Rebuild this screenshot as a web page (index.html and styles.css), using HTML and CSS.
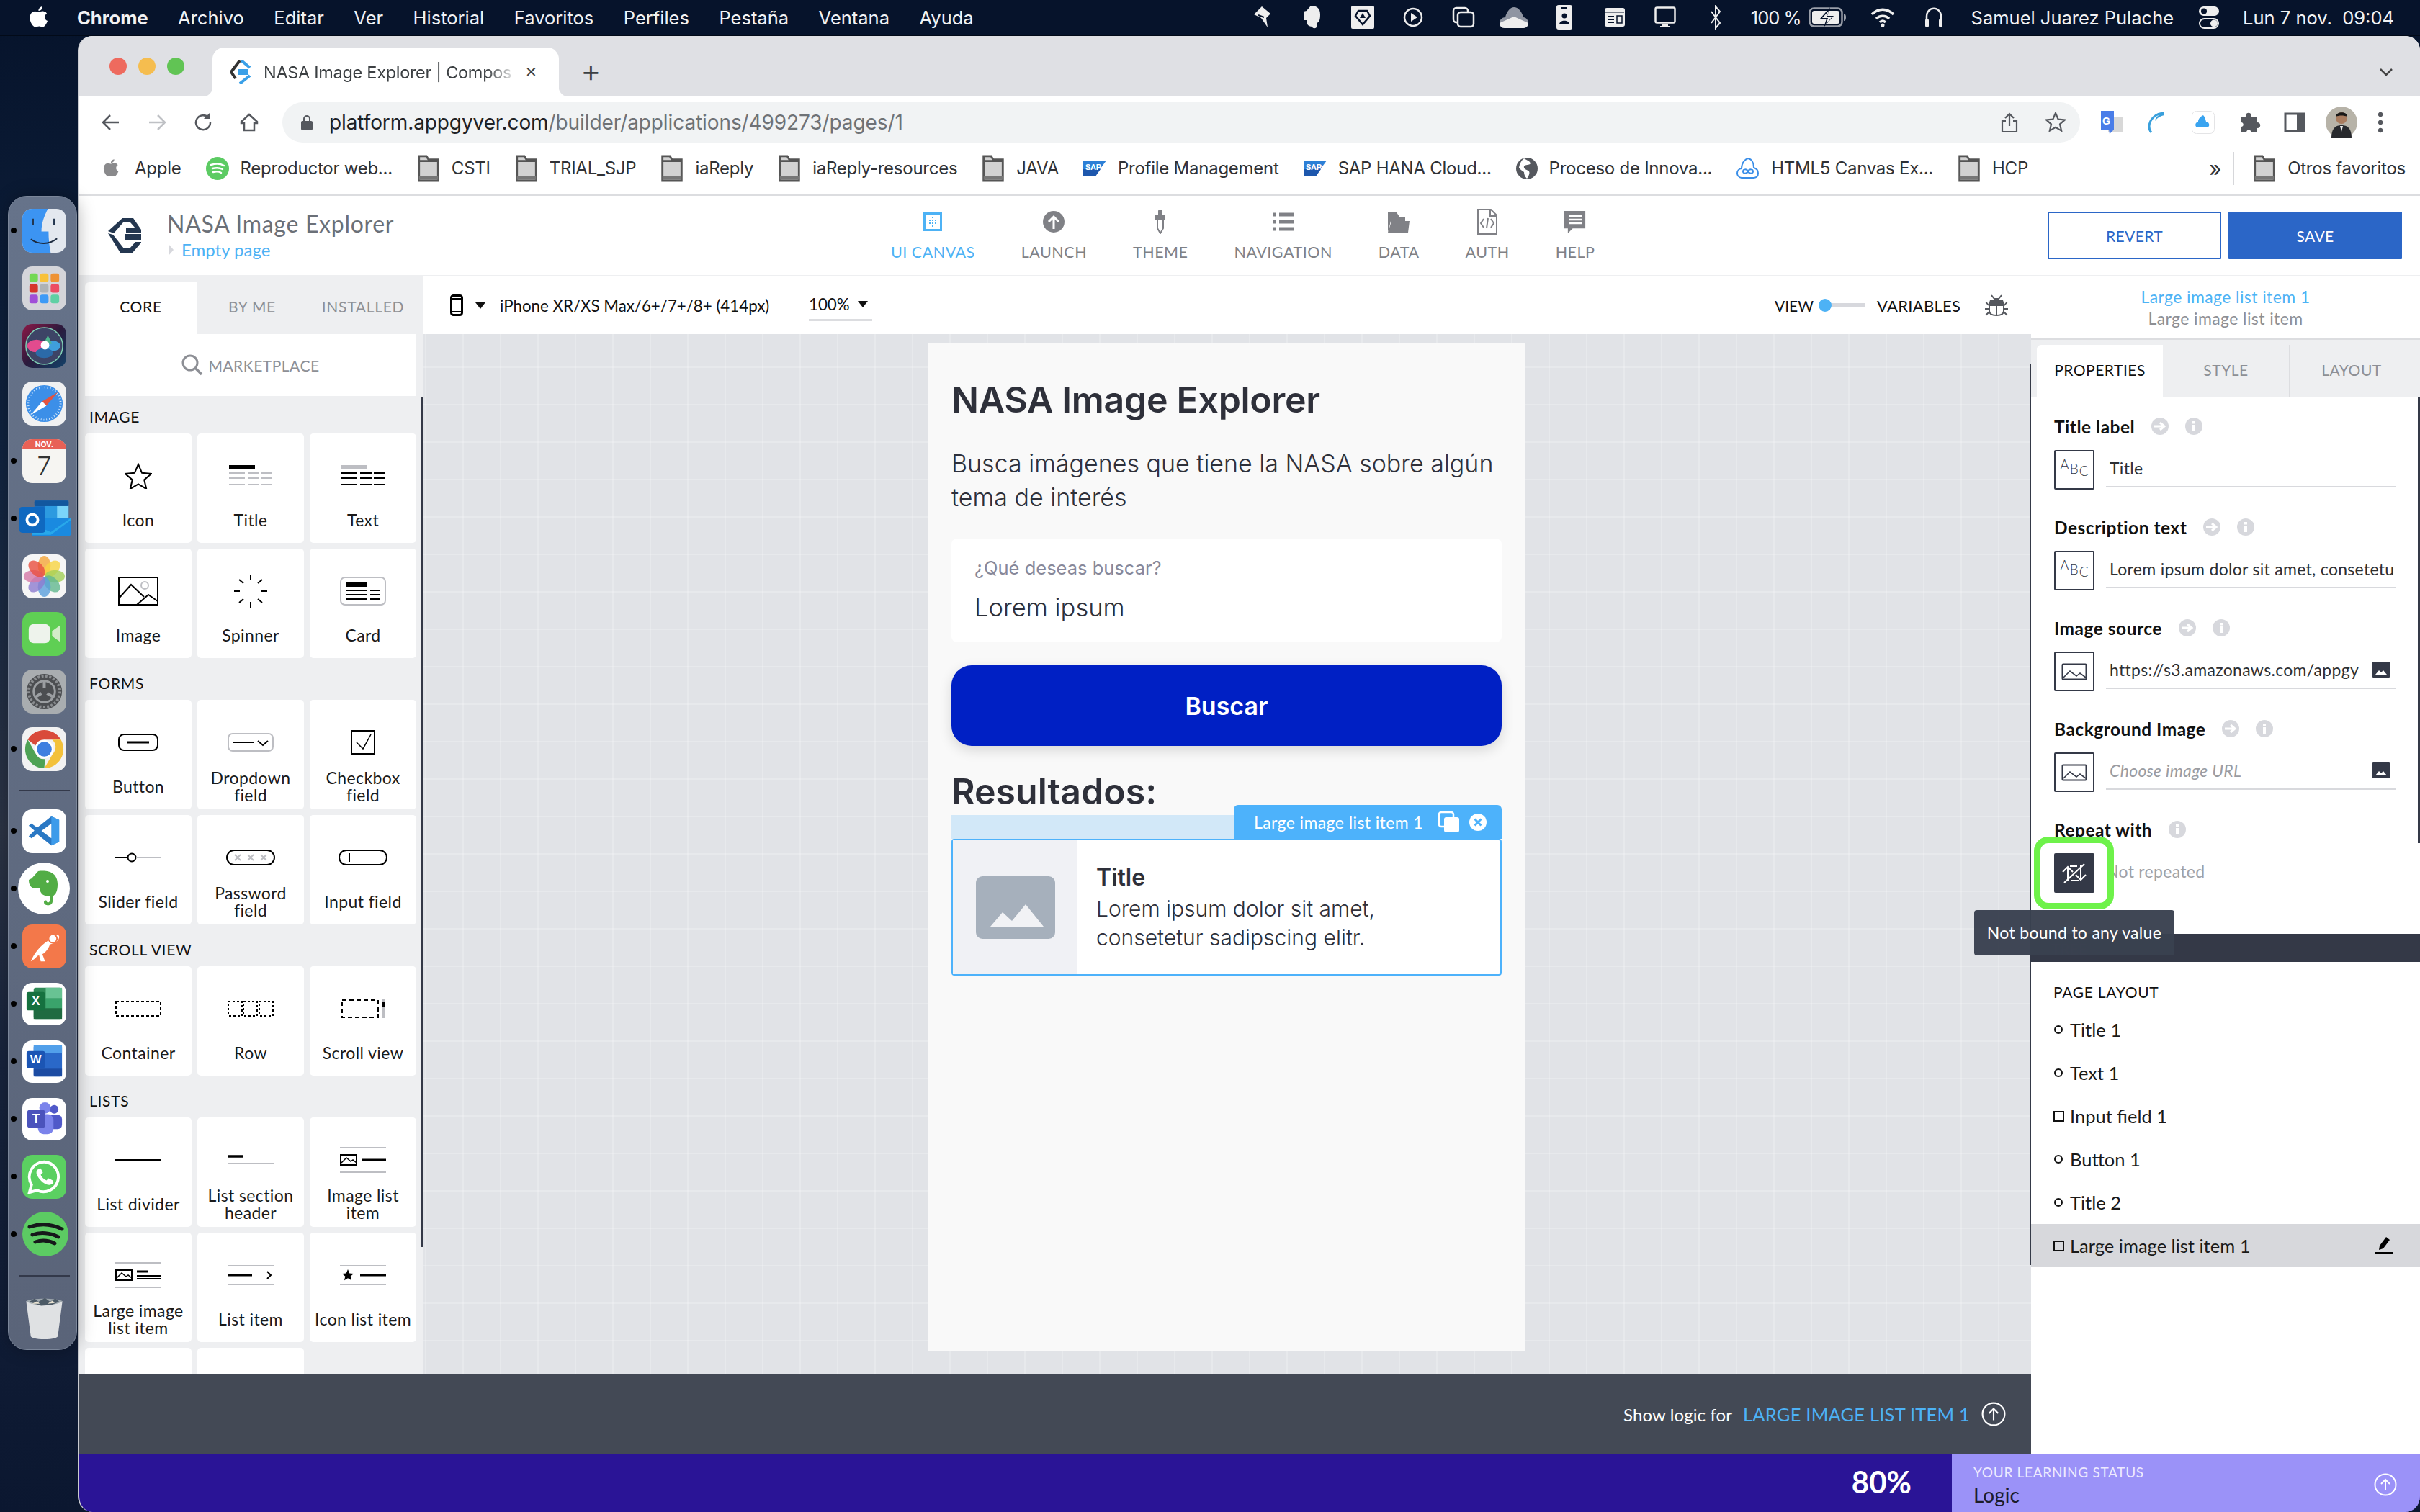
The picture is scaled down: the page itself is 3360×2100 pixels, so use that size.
FILE: index.html
```html
<!DOCTYPE html>
<html lang="es">
<head>
    <meta charset="UTF-8">
    <title>NASA Image Explorer | Composer</title>
    <link rel="stylesheet" href="styles.css">
</head>
<body>
<svg class="defs" width="0" height="0">
    <symbol id="folder" viewBox="0 0 32 40"><path d="M2 2h11l3 5h14v31H2z" fill="#d2d2d2" stroke="#555" stroke-width="3"/><path d="M2 9h28" stroke="#555" stroke-width="3"/><path d="M2 34h28" stroke="#777" stroke-width="5"/></symbol>
    <symbol id="sap" viewBox="0 0 32 26"><path d="M0 2h32L16 24H0z" fill="#2c7fd6"/><path d="M0 14h24l-7 10H0z" fill="#1d57ad"/></symbol>
    <symbol id="side-img" viewBox="0 0 36 24"><rect x="1.5" y="1.5" width="33" height="21" rx="1" fill="none" stroke="#343947" stroke-width="2"/><path d="M3 20l9-9 9 7 5-4 8 6" fill="none" stroke="#343947" stroke-width="1.6"/></symbol>
    <symbol id="next" viewBox="0 0 24 24"><circle cx="12" cy="12" r="12" fill="#d7d8dd"/><path d="M4 12h14M12 7l6 5-6 5" stroke="#fff" stroke-width="3" fill="none"/></symbol>
    <symbol id="info" viewBox="0 0 24 24"><circle cx="12" cy="12" r="12" fill="#d7d8dd"/><rect x="10" y="10" width="4" height="9" fill="#fff"/><rect x="10" y="5" width="4" height="3.5" fill="#fff"/></symbol>
    <symbol id="pic" viewBox="0 0 24 22"><rect width="24" height="22" rx="1" fill="#343947"/><path d="M4 18l5-6 3 3 3-3 5 6z" fill="#fff"/></symbol>
    <symbol id="circle-up" viewBox="0 0 32 32"><circle cx="16" cy="16" r="14.5" fill="none" stroke="currentColor" stroke-width="2"/><path d="M16 24V9M10 15l6-6 6 6" fill="none" stroke="currentColor" stroke-width="2"/></symbol>
    <symbol id="mini-star" viewBox="0 0 40 38"><path d="M20 2l5.4 12.6 13.6 1.2-10.300 9 3.100 13.200L20 31l-11.800 7 3.100-13.200L1 15.800l13.600-1.200z" fill="none" stroke="#000" stroke-width="2.200"/></symbol>
</svg>

<header class="menubar">
    <svg class="menu-apple" viewBox="0 0 24 30"><path d="M17 1c.3 3-2.400 5.600-5 5.400C11.700 3.700 14.500 1.200 17 1zM12.300 8c1.300 0 2.800-1.100 5-1.100 1.400 0 3.800.6 5.200 2.800-3.900 2.400-3.200 7.900.9 9.500-1 2.800-3.600 7.800-6.300 7.800-1.600 0-2.500-1-4.300-1-1.900 0-2.900 1-4.400 1C5.200 27 1 20.500 1 15.200 1 10 4.300 7 7.400 7c2 0 3.700 1 4.900 1z" fill="#fff"/></svg>
    <nav class="menu-left">
        <strong>Chrome</strong><span>Archivo</span><span>Editar</span><span>Ver</span><span>Historial</span><span>Favoritos</span><span>Perfiles</span><span>Pestaña</span><span>Ventana</span><span>Ayuda</span>
    </nav>
    <div class="menu-right">
        <i class="tray"><svg width="26" height="32" viewBox="0 0 26 32"><path d="M13 1l12 10-6 6 2 13-9-13-10-5z" fill="#eee"/><path d="M8 13l8 3" stroke="#06132b" stroke-width="2"/></svg></i>
        <i class="tray"><svg width="28" height="34" viewBox="0 0 28 34"><path d="M6 8l6-7c8 0 13 3 13 12 0 7-1 11-5 12v5c0 3-6 3-6 0-6 0-8-4-8-9H2V9z" fill="#eee"/></svg></i>
        <i class="tray"><svg width="32" height="32" viewBox="0 0 32 32"><rect width="32" height="32" rx="2" fill="#eee"/><path d="M10 7h12l4 7-10 12L6 14z" fill="none" stroke="#06132b" stroke-width="2.500"/><path d="M16 10l4 7h-8z" fill="#06132b"/></svg></i>
        <i class="tray"><svg width="28" height="28" viewBox="0 0 28 28"><circle cx="14" cy="14" r="12" fill="none" stroke="#eee" stroke-width="2.500"/><path d="M11 8l9 6-9 6z" fill="#eee"/></svg></i>
        <i class="tray"><svg width="32" height="30" viewBox="0 0 32 30"><rect x="2" y="2" width="20" height="20" rx="4" fill="none" stroke="#eee" stroke-width="2.500"/><rect x="8" y="8" width="22" height="20" rx="4" fill="#06132b" stroke="#eee" stroke-width="2.500"/></svg></i>
        <i class="tray"><svg width="42" height="32" viewBox="0 0 42 32"><path d="M1 24c0-5 4-8 8-8 2-8 7-14 12-14 6 0 11 6 13 14 4 0 7 4 7 8 0 4-3 7-7 7H8c-4 0-7-3-7-7z" fill="#8f95a2"/><path d="M1 24l20-9 20 9c0 4-3 7-7 7H8c-4 0-7-3-7-7z" fill="#eee"/></svg></i>
        <i class="tray"><svg width="22" height="34" viewBox="0 0 22 34"><rect width="22" height="34" rx="3" fill="#eee"/><rect x="7" y="3" width="8" height="2" fill="#06132b"/><circle cx="11" cy="15" r="3.500" fill="#06132b"/><path d="M4 27c0-7 14-7 14 0z" fill="#06132b"/></svg></i>
        <i class="tray"><svg width="30" height="28" viewBox="0 0 30 28"><rect x="1" y="1" width="28" height="26" rx="3" fill="#eee"/><path d="M2 7h26" stroke="#06132b"/><path d="M5 12h9v2H5zM5 16h9v2H5zM5 20h9v2H5z" fill="#06132b"/><path d="M18 12h7v10h-7z" fill="none" stroke="#06132b" stroke-width="1.500"/></svg></i>
        <i class="tray"><svg width="30" height="30" viewBox="0 0 30 30"><rect x="1.500" y="1.500" width="27" height="21" rx="2" fill="none" stroke="#eee" stroke-width="2.500"/><path d="M11 24h8v3h3v2H8v-2h3z" fill="#eee"/></svg></i>
        <i class="tray"><svg width="16" height="34" viewBox="0 0 16 34"><path d="M2 9l12 16-6 7V2l6 7L2 25" fill="none" stroke="#eee" stroke-width="2"/></svg></i>
        <span class="menu-batt">100 %</span>
        <svg class="menu-gap" width="52" height="28" viewBox="0 0 52 28"><rect x="1.500" y="1.500" width="45" height="25" rx="6" fill="none" stroke="#9a9fa9" stroke-width="2.500"/><rect x="5" y="5" width="38" height="18" rx="3" fill="#eee"/><path d="M49 9v10c2 0 3-2 3-5s-1-5-3-5z" fill="#9a9fa9"/><path d="M30 0L16 16h9l-4 12 14-16h-9z" fill="#06132b"/><path d="M29 4L19 15h8l-3 9 9-11h-8z" fill="#eee"/></svg>
        <svg class="menu-wifi" width="34" height="28" viewBox="0 0 34 28"><path d="M2 10c9-9 21-9 30 0M8 16c5-5 13-5 18 0M13 21c2.500-2.500 5.500-2.500 8 0" fill="none" stroke="#eee" stroke-width="3.500"/><circle cx="17" cy="25" r="2.500" fill="#eee"/></svg>
        <svg class="menu-head" width="28" height="30" viewBox="0 0 28 30"><path d="M4 24V14C4 -1 24 -1 24 14v10" fill="none" stroke="#eee" stroke-width="2.500"/><rect x="2" y="17" width="5" height="12" rx="2.500" fill="#eee"/><rect x="21" y="17" width="5" height="12" rx="2.500" fill="#eee"/></svg>
        <span class="menu-user">Samuel Juarez Pulache</span>
        <svg class="menu-toggle" width="30" height="32" viewBox="0 0 30 32"><rect x="1" y="1" width="28" height="13" rx="6.500" fill="#eee"/><circle cx="8" cy="7.500" r="4" fill="#06132b"/><rect x="2" y="18" width="26" height="13" rx="6.500" fill="none" stroke="#eee" stroke-width="2"/><circle cx="22" cy="24.500" r="5" fill="#eee"/></svg>
        <span class="menu-clock">Lun 7 nov.&nbsp; 09:04</span>
    </div>
</header>

<aside class="dock">
    <div class="dock-slot on"><svg viewBox="0 0 62 62"><rect width="62" height="62" rx="14" fill="#e3e8ef"/><path d="M14 0h22c-5 10-9 20-9 32h10c0 10 1 20 3 30H14C6 62 0 56 0 48V14C0 6 6 0 14 0z" fill="#3c94f2"/><path d="M15 14v9M45 14v9" stroke="#23364f" stroke-width="2.500"/><path d="M12 43c11 8 26 8 37-1" fill="none" stroke="#1d2b3f" stroke-width="2"/></svg></div>
    <div class="dock-slot"><svg viewBox="0 0 62 62"><rect width="62" height="62" rx="14" fill="#d4d5da"/><g><rect x="10" y="10" width="12" height="12" rx="3" fill="#72d854"/><rect x="25" y="10" width="12" height="12" rx="3" fill="#f8c13a"/><rect x="40" y="10" width="12" height="12" rx="3" fill="#ee9233"/><rect x="10" y="25" width="12" height="12" rx="3" fill="#d6352b"/><rect x="25" y="25" width="12" height="12" rx="3" fill="#aeb2b6"/><rect x="40" y="25" width="12" height="12" rx="3" fill="#ec4c63"/><rect x="10" y="40" width="12" height="12" rx="3" fill="#a04fd8"/><rect x="25" y="40" width="12" height="12" rx="3" fill="#3d9af6"/><rect x="40" y="40" width="12" height="12" rx="3" fill="#5fd0a4"/></g></svg></div>
    <div class="dock-slot"><svg viewBox="0 0 62 62"><defs><linearGradient id="siri" x1="0" y1="0" x2="1" y2="1"><stop offset="0" stop-color="#8d1846"/><stop offset=".5" stop-color="#2a1a3c"/><stop offset="1" stop-color="#12436a"/></linearGradient></defs><rect width="62" height="62" rx="14" fill="url(#siri)"/><circle cx="31" cy="31" r="26" fill="#3d4466" stroke="#7fd0b4" stroke-width="1.500"/><ellipse cx="20" cy="31" rx="13" ry="9" fill="#e24b8e"/><ellipse cx="44" cy="31" rx="10" ry="7" fill="#3f9fdc"/><ellipse cx="31" cy="41" rx="12" ry="7" fill="#2b6aa8"/><path d="M36 16l6 12-12 0z" fill="#4fb58e"/><circle cx="32" cy="30" r="6" fill="#fff"/></svg></div>
    <div class="dock-slot"><svg viewBox="0 0 62 62"><rect width="62" height="62" rx="14" fill="#f0f1f2"/><circle cx="31" cy="31" r="26" fill="#3c8fe8"/><circle cx="31" cy="31" r="23" fill="none" stroke="#cfe5fb" stroke-width="3" stroke-dasharray="1 3"/><path d="M50 15L28 28l6 6z" fill="#e5533d"/><path d="M12 47l22-13-6-6z" fill="#fff"/></svg></div>
    <div class="dock-slot on"><svg viewBox="0 0 62 62"><rect width="62" height="62" rx="14" fill="#f6f5f2"/><path d="M0 14C0 6 6 0 14 0h34c8 0 14 6 14 14H0z" fill="#e86156"/><text x="31" y="11" font-size="10.500" font-weight="700" fill="#fff" text-anchor="middle" font-family="Inter">NOV.</text><text x="31" y="51" font-size="36" fill="#333" text-anchor="middle" font-family="Inter" font-weight="300">7</text></svg></div>
    <div class="dock-slot on"><svg class="wide" viewBox="0 0 76 52"><rect x="22" y="0" width="50" height="30" fill="#1a6fbf"/><rect x="22" y="0" width="50" height="8" rx="2" fill="#12579e"/><rect x="55" y="8" width="17" height="22" fill="#7ad4fa"/><rect x="38" y="8" width="17" height="22" fill="#2c9ae0"/><path d="M18 26l58-1v22c0 3-2 5-5 5H18z" fill="#1a8ae0"/><path d="M18 34l28 12 30-21v3L46 50H18z" fill="#28a8ea"/><rect x="0" y="9" width="38" height="38" rx="4" fill="#0f68c0"/><circle cx="19" cy="28" r="8" fill="none" stroke="#fff" stroke-width="4"/></svg></div>
    <div class="dock-slot"><svg viewBox="0 0 62 62"><rect width="62" height="62" rx="14" fill="#f6f6f6"/><g transform="translate(31 31)" fill-opacity=".8"><ellipse cy="-15" rx="9" ry="14" fill="#f5a63a"/><ellipse cy="-15" rx="9" ry="14" fill="#f8d442" transform="rotate(45)"/><ellipse cy="-15" rx="9" ry="14" fill="#a3cf58" transform="rotate(90)"/><ellipse cy="-15" rx="9" ry="14" fill="#62b88e" transform="rotate(135)"/><ellipse cy="-15" rx="9" ry="14" fill="#5a9fdc" transform="rotate(180)"/><ellipse cy="-15" rx="9" ry="14" fill="#8d7ccf" transform="rotate(225)"/><ellipse cy="-15" rx="9" ry="14" fill="#d678a8" transform="rotate(270)"/><ellipse cy="-15" rx="9" ry="14" fill="#ea4f3e" transform="rotate(315)"/></g></svg></div>
    <div class="dock-slot"><svg viewBox="0 0 62 62"><rect width="62" height="62" rx="14" fill="#5fcf54"/><rect x="9" y="17" width="30" height="27" rx="7" fill="#eef3ec"/><path d="M42 27l11-8v23l-11-8z" fill="#d3ecc9"/></svg></div>
    <div class="dock-slot"><svg viewBox="0 0 62 62"><rect width="62" height="62" rx="14" fill="#a9adb0"/><circle cx="31" cy="31" r="25" fill="#4c4e51"/><circle cx="31" cy="31" r="22" fill="none" stroke="#8a8d90" stroke-width="4" stroke-dasharray="3 2.500"/><circle cx="31" cy="31" r="15" fill="none" stroke="#9b9ea1" stroke-width="3"/><path d="M31 31V16M31 31l13 8M31 31l-13 8" stroke="#9b9ea1" stroke-width="4"/><circle cx="31" cy="31" r="5" fill="#4c4e51"/></svg></div>
    <div class="dock-slot on"><svg viewBox="0 0 62 62"><rect width="62" height="62" rx="14" fill="#f2f2f2"/><path d="M31 4a27 27 0 0 1 23.400 13.500H31a13.500 13.500 0 0 0-12.500 8.500L7.600 17.500A27 27 0 0 1 31 4z" fill="#d94a3b"/><path d="M54.400 17.500A27 27 0 0 1 31 58l12-20.500a13.500 13.500 0 0 0-1-20z" fill="#f3c13a"/><path d="M31 58A27 27 0 0 1 7.600 17.500L19 37.500a13.500 13.500 0 0 0 13 7.500z" fill="#4ea254"/><circle cx="31" cy="31" r="13" fill="#fff"/><circle cx="31" cy="31" r="10.500" fill="#3f7fe0"/></svg></div>
    <div class="dock-sep"></div>
    <div class="dock-slot on"><svg viewBox="0 0 62 62"><rect width="62" height="62" rx="14" fill="#fff"/><path d="M9 23l4-3 8 6 20-16 11 5v31l-11 5-20-16-8 6-4-3 8-8z" fill="#2a78c4"/><path d="M41 10l11 5v31l-11 5z" fill="#3d9bea"/><path d="M41 20v21L27 30.500z" fill="#fff"/></svg></div>
    <div class="dock-slot on"><svg class="big" viewBox="0 0 72 72"><circle cx="36" cy="36" r="36" fill="#fff"/><path d="M19 22l9-10c14-2 27 2 27 18 0 9-2 14-7 17v7c0 7-12 7-12 1 0-3 4-3 4-1 0 2 4 2 4-1v-6c-9 0-13-4-14-11h-5C17 36 15 30 15 24z" fill="#52ad45"/><circle cx="41" cy="26" r="2" fill="#fff"/></svg></div>
    <div class="dock-slot on"><svg viewBox="0 0 62 62"><rect width="62" height="62" rx="14" fill="#f3784a"/><path d="M12 52c5-12 13-22 24-29 3-5 8-8 14-8 2 0 3 3 1 6-3 5-8 6-12 7-3 9-9 15-17 16-4 4-6 6-10 8z" fill="#fff"/><circle cx="43" cy="20" r="6" fill="#fff" stroke="#f3784a" stroke-width="2"/><path d="M27 38l5 14h-6l-3-11" fill="#fff"/></svg></div>
    <div class="dock-slot on"><svg viewBox="0 0 62 62"><rect y="1" width="62" height="60" rx="14" fill="#fff"/><rect x="16" y="8" width="40" height="44" rx="3" fill="#2f8a57"/><rect x="33" y="8" width="23" height="15" fill="#68c393"/><rect x="33" y="23" width="23" height="14" fill="#3aa36b"/><rect x="16" y="37" width="40" height="15" fill="#1f6b41"/><rect x="6" y="14" width="26" height="26" rx="3" fill="#15713f"/><text x="19" y="33" font-size="18" font-weight="700" fill="#fff" text-anchor="middle" font-family="Liberation Sans">X</text></svg></div>
    <div class="dock-slot on"><svg viewBox="0 0 62 62"><rect y="1" width="62" height="60" rx="14" fill="#fff"/><rect x="16" y="8" width="40" height="44" rx="3" fill="#2a68c8"/><rect x="16" y="8" width="40" height="11" fill="#52a0ea"/><rect x="16" y="41" width="40" height="11" fill="#1c4ca3"/><rect x="6" y="16" width="26" height="24" rx="3" fill="#1b55b4"/><text x="19" y="34" font-size="17" font-weight="700" fill="#fff" text-anchor="middle" font-family="Liberation Sans">W</text></svg></div>
    <div class="dock-slot on"><svg viewBox="0 0 62 62"><rect y="1" width="62" height="60" rx="14" fill="#fff"/><circle cx="45" cy="17" r="6" fill="#5059c9"/><circle cx="32" cy="15" r="8" fill="#7b83eb"/><rect x="36" y="25" width="20" height="20" rx="6" fill="#5059c9"/><rect x="22" y="24" width="22" height="28" rx="8" fill="#7b83eb"/><rect x="7" y="18" width="25" height="25" rx="3" fill="#4b53bc"/><text x="19.500" y="37" font-size="18" font-weight="700" fill="#fff" text-anchor="middle" font-family="Liberation Sans">T</text></svg></div>
    <div class="dock-slot on"><svg viewBox="0 0 62 62"><rect width="62" height="62" rx="14" fill="#5bd061"/><path d="M31 10a21 21 0 0 0-18 32l-3 11 11-3a21 21 0 1 0 10-40z" fill="none" stroke="#fff" stroke-width="4"/><path d="M23 20c-3 1-4 5-2 9 3 6 8 11 14 13 4 1 8 0 9-3l-1-3-6-3-3 3c-3-1-7-5-8-8l3-3-3-6z" fill="#fff"/></svg></div>
    <div class="dock-slot on"><svg class="wide" viewBox="0 0 64 62"><ellipse cx="32" cy="31" rx="32" ry="31" fill="#5ccb63"/><path d="M10 21c15-5 31-4 45 3M14 32c11-4 25-3 36 3M18 42c9-3 19-2 27 2" fill="none" stroke="#16181a" stroke-width="5" stroke-linecap="round"/></svg></div>
    <div class="dock-sep low"></div>
    <div class="dock-slot"><svg viewBox="0 0 62 68"><path d="M3 8l7 54c0 3 8 5 21 5s21-2 21-5l7-54z" fill="#dfe1e3"/><path d="M3 8c8-5 48-5 56 0-8 8-48 8-56 0z" fill="#9ea7ad"/><path d="M8 9l8-5 6 5 10-6 8 6 8-5 6 5-12 5-16 1z" fill="#4b5965"/><path d="M12 12l8-4 4 4zM36 12l8-5 3 4z" fill="#e9e3d2"/></svg></div>
</aside>

<div class="window">
    <div class="tabstrip">
        <div class="lights"><i class="red"></i><i class="yellow"></i><i class="green"></i></div>
        <div class="tab">
            <svg class="tab-fav" width="30" height="34" viewBox="0 0 30 34"><path d="M14 1L2 17l6 9" fill="none" stroke="#333" stroke-width="4"/><path d="M16 1l12 10M14 33l14-11" fill="none" stroke="#3aa0e8" stroke-width="4"/><path d="M12 13h14v8H12z" fill="#3aa0e8"/></svg>
            <span class="tab-title">NASA Image Explorer | Compos</span>
            <span class="tab-x">✕</span>
        </div>
        <span class="tab-plus">+</span>
        <svg class="tab-more" width="18" height="12" viewBox="0 0 18 12"><path d="M1 2l8 8 8-8" fill="none" stroke="#444" stroke-width="2.500"/></svg>
    </div>

    <div class="toolbar">
        <svg class="tool-btn" viewBox="0 0 28 28"><path d="M25 14H4M13 4L3 14l10 10" fill="none" stroke="#55585e" stroke-width="2.500"/></svg>
        <svg class="tool-btn" viewBox="0 0 28 28"><path d="M3 14h21M15 4l10 10-10 10" fill="none" stroke="#bfc1c5" stroke-width="2.500"/></svg>
        <svg class="tool-btn" viewBox="0 0 28 28"><path d="M24 14a10 10 0 1 1-3-7" fill="none" stroke="#55585e" stroke-width="2.500"/><path d="M23 1v8h-8z" fill="#55585e"/></svg>
        <svg class="tool-btn" viewBox="0 0 28 28"><path d="M14 3L3 13v2h4v10h14V15h4v-2z" fill="none" stroke="#55585e" stroke-width="2.500"/></svg>
        <div class="omnibox">
            <svg class="lock" width="16" height="22" viewBox="0 0 16 22"><rect y="9" width="16" height="13" rx="2" fill="#55585e"/><path d="M4 9V6a4 4 0 0 1 8 0v3" fill="none" stroke="#55585e" stroke-width="2"/></svg>
            <span class="url"><b>platform.appgyver.com</b>/builder/applications/499273/pages/1</span>
            <svg class="omni-icon" viewBox="0 0 28 30"><path d="M14 20V3M8 9l6-6 6 6M9 13H4v15h20V13h-5" fill="none" stroke="#55585e" stroke-width="2.200"/></svg>
            <svg class="omni-icon" viewBox="0 0 28 30"><path d="M14 2l3.700 8.600 9.300.8-7 6.100 2.100 9.100-8.100-4.800-8.100 4.800 2.100-9.100-7-6.100 9.300-.8z" fill="none" stroke="#55585e" stroke-width="2.200"/></svg>
        </div>
        <div class="extensions">
            <svg width="32" height="32" viewBox="0 0 32 32"><rect x="12" y="8" width="20" height="22" fill="#d8d8d8"/><path d="M2 0h18v26l-6 6-1-6H2z" fill="#4a7de8"/><text x="4" y="19" font-size="14" font-weight="700" fill="#fff" font-family="Liberation Sans">G</text></svg>
            <svg width="32" height="32" viewBox="0 0 32 32"><path d="M26 3C14 3 5 12 5 22c0 4 1 6 3 8" fill="none" stroke="#3aa0dc" stroke-width="3"/><path d="M26 3c-7 1-12 5-13 11 4-5 8-7 13-8z" fill="#3aa0dc"/></svg>
            <svg width="32" height="32" viewBox="0 0 32 32"><rect x=".5" y=".5" width="31" height="31" rx="6" fill="#fff" stroke="#e4e4e6"/><path d="M9 23c-5 0-5-7 0-8 0-4 3-7 7-9 3 3 3 6 4 9 5 0 6 8 1 8z" fill="#3aa4f0"/></svg>
            <svg width="32" height="32" viewBox="0 0 32 32"><path d="M4 8h7c-1-7 9-7 8 0h7v8c7-1 7 9 0 8v6h-8c1-5-6-5-6 0H4v-8c5 1 5-7 0-6z" fill="#55585e"/></svg>
            <svg width="30" height="30" viewBox="0 0 30 30"><path d="M2 3h26v24H2z" fill="none" stroke="#55585e" stroke-width="3"/><rect x="18" y="3" width="10" height="24" fill="#55585e"/></svg>
            <svg class="avatar" width="44" height="44" viewBox="0 0 44 44"><circle cx="22" cy="22" r="22" fill="#b7b3a8"/><path d="M8 44c0-14 6-18 14-18s14 4 14 18z" fill="#27292d"/><circle cx="22" cy="16" r="8" fill="#a97c5f"/><path d="M14 14c0-7 16-8 16 0-5-2-11-2-16 0z" fill="#191919"/><path d="M20 27h4l-2 8z" fill="#eee"/></svg>
            <svg width="8" height="30" viewBox="0 0 8 30"><circle cx="4" cy="4" r="3.200" fill="#55585e"/><circle cx="4" cy="15" r="3.200" fill="#55585e"/><circle cx="4" cy="26" r="3.200" fill="#55585e"/></svg>
        </div>
    </div>

    <div class="bookmarks">
        <span class="bm bm-apple"><svg class="bm-ico" width="22" height="28" viewBox="0 0 24 30"><path d="M17 1c.3 3-2.400 5.600-5 5.400C11.700 3.700 14.500 1.200 17 1zM12.300 8c1.300 0 2.800-1.100 5-1.100 1.400 0 3.800.6 5.200 2.800-3.900 2.400-3.200 7.900.9 9.500-1 2.800-3.600 7.800-6.300 7.800-1.600 0-2.500-1-4.300-1-1.900 0-2.900 1-4.400 1C5.200 27 1 20.500 1 15.200 1 10 4.300 7 7.400 7c2 0 3.700 1 4.900 1z" fill="#8a8a8c"/></svg>Apple</span>
        <span class="bm"><svg class="bm-ico" width="32" height="32" viewBox="0 0 32 32"><circle cx="16" cy="16" r="16" fill="#5ccb63"/><path d="M7 11c6-2 13-2 18 1M9 16c5-1 10-1 14 1M10 21c4-1 8-1 11 1" fill="none" stroke="#fff" stroke-width="2.500" stroke-linecap="round"/></svg>Reproductor web...</span>
        <span class="bm"><svg class="bm-ico" width="32" height="38"><use href="#folder"/></svg>CSTI</span>
        <span class="bm"><svg class="bm-ico" width="32" height="38"><use href="#folder"/></svg>TRIAL_SJP</span>
        <span class="bm"><svg class="bm-ico" width="32" height="38"><use href="#folder"/></svg>iaReply</span>
        <span class="bm"><svg class="bm-ico" width="32" height="38"><use href="#folder"/></svg>iaReply-resources</span>
        <span class="bm"><svg class="bm-ico" width="32" height="38"><use href="#folder"/></svg>JAVA</span>
        <span class="bm"><svg class="bm-ico" width="32" height="26" viewBox="0 0 32 26"><use href="#sap"/><text x="3" y="15" font-size="11" font-weight="700" fill="#fff" font-family="Liberation Sans">SAP</text></svg>Profile Management</span>
        <span class="bm"><svg class="bm-ico" width="32" height="26" viewBox="0 0 32 26"><use href="#sap"/><text x="3" y="15" font-size="11" font-weight="700" fill="#fff" font-family="Liberation Sans">SAP</text></svg>SAP HANA Cloud...</span>
        <span class="bm"><svg class="bm-ico" width="30" height="30" viewBox="0 0 30 30"><circle cx="15" cy="15" r="15" fill="#55585e"/><path d="M11 1c4 3 8 3 9 7-2 3-7 1-9 4-1 3 3 5 6 6 3 2 1 7-2 11-3-3-4-6-4-9-2-2-5-3-7-6 1-6 4-11 7-13z" fill="#fff"/></svg>Proceso de Innova...</span>
        <span class="bm"><svg class="bm-ico" width="32" height="32" viewBox="0 0 32 32"><path d="M7 29c-8-1-8-12 0-13 0-8 5-13 9-14 5 1 8 6 8 13 8 2 8 13 0 14z" fill="none" stroke="#3a8ee8" stroke-width="2"/><path d="M16 20c-2-4-7-3-7 0s5 4 7 0c2-4 7-3 7 0s-5 4-7 0z" fill="none" stroke="#3a8ee8" stroke-width="2"/></svg>HTML5 Canvas Ex...</span>
        <span class="bm"><svg class="bm-ico" width="32" height="38"><use href="#folder"/></svg>HCP</span>
        <span class="bm-more">»</span>
        <span class="bm bm-other"><svg class="bm-ico" width="32" height="38"><use href="#folder"/></svg>Otros favoritos</span>
    </div>

    <div class="app-header">
        <div class="brand">
            <svg class="brand-logo" width="46" height="48" viewBox="0 0 46 48"><path d="M20 0h15l11 16v4H25v-6h13l-7-8H21L8 21l-8-3z" fill="#243750"/><rect x="24" y="22" width="22" height="9" fill="#243750"/><path d="M0 21l7 2 15 19h8l8-9h8v1L34 48H17z" fill="#243750"/></svg>
            <div>
                <div class="brand-name">NASA Image Explorer</div>
                <div class="brand-page"><i></i>Empty page</div>
            </div>
        </div>
        <nav class="app-nav">
            <a class="active"><svg width="26" height="26" viewBox="0 0 26 26"><rect x="1.500" y="1.500" width="23" height="23" fill="none" stroke="#4db2f5" stroke-width="3"/><path d="M13 6v14M9 10v6M17 10v6" stroke="#4db2f5" stroke-width="2" stroke-dasharray="2 2"/></svg>UI CANVAS</a>
            <a><svg width="30" height="30" viewBox="0 0 30 30"><circle cx="15" cy="15" r="15" fill="#808186"/><path d="M15 25V9M8 15l7-7 7 7" fill="none" stroke="#fff" stroke-width="3"/></svg>LAUNCH</a>
            <a><svg width="18" height="34" viewBox="0 0 18 34"><rect x="6" y="0" width="6" height="10" rx="2" fill="#808186"/><rect x="2" y="8" width="14" height="6" fill="#808186"/><path d="M5 14v12l4 7 4-7V14" fill="none" stroke="#808186" stroke-width="2"/></svg>THEME</a>
            <a><svg width="30" height="28" viewBox="0 0 30 28"><path d="M9 4h21M9 14h21M9 24h21" stroke="#808186" stroke-width="5"/><path d="M0 4h5M0 14h5M0 24h5" stroke="#808186" stroke-width="5"/></svg>NAVIGATION</a>
            <a><svg width="30" height="30" viewBox="0 0 30 30"><path d="M0 2h12l4 6h8v6H4L0 30z" fill="#808186"/><path d="M5 14h25l-2 16H0z" fill="#808186"/></svg>DATA</a>
            <a><svg width="28" height="36" viewBox="0 0 28 36"><path d="M1 1h18l8 8v26H1z" fill="none" stroke="#808186" stroke-width="2"/><path d="M18 1v9h9M9 14l-4 6 4 6M19 14l4 6-4 6M15 13l-2 14" fill="none" stroke="#808186" stroke-width="2"/></svg>AUTH</a>
            <a><svg width="30" height="30" viewBox="0 0 30 30"><path d="M0 0h30v25H12l-7 7v-7H0z" fill="#808186" transform="scale(.97)"/><path d="M6 7h18M6 12h18M6 17h18" stroke="#fff" stroke-width="2.500"/></svg>HELP</a>
        </nav>
        <div class="app-actions">
            <button class="btn-revert">REVERT</button>
            <button class="btn-save">SAVE</button>
        </div>
    </div>

    <div class="app-body">
        <div class="designer">
            <div class="design-main">
                <section class="palette">
                    <div class="pal-tabs">
                        <span class="active">CORE</span><span>BY ME</span><span>INSTALLED</span>
                    </div>
                    <div class="marketplace">
                        <svg width="30" height="30" viewBox="0 0 30 30"><circle cx="12" cy="12" r="10" fill="none" stroke="#8d8f95" stroke-width="3"/><path d="M19 19l9 9" stroke="#8d8f95" stroke-width="3.500"/></svg>
                        MARKETPLACE
                    </div>
                    <h4 class="pal-head first">IMAGE</h4>
                    <div class="pal-grid">
                        <div class="card"><div class="card-ico"><svg width="38" height="36"><use href="#mini-star"/></svg></div><span>Icon</span></div>
                        <div class="card"><div class="card-ico"><svg width="60" height="30" viewBox="0 0 60 30"><rect width="36" height="6" fill="#000"/><path d="M0 11h60M0 18h60M0 27h60" stroke="#bdbec3" stroke-width="2" stroke-dasharray="22 4 16 3 15 0"/></svg></div><span>Title</span></div>
                        <div class="card"><div class="card-ico"><svg width="60" height="30" viewBox="0 0 60 30"><rect width="36" height="6" fill="#bdbec3"/><path d="M0 11h60M0 18h60M0 27h60" stroke="#000" stroke-width="2" stroke-dasharray="22 4 16 3 15 0"/></svg></div><span>Text</span></div>
                        <div class="card"><div class="card-ico"><svg width="56" height="40" viewBox="0 0 56 40"><rect x="1" y="1" width="54" height="38" fill="none" stroke="#000" stroke-width="2"/><path d="M1 30l17-19 18 17M26 39l16-14 13 9" fill="none" stroke="#000" stroke-width="2"/><circle cx="37" cy="12" r="5" fill="none" stroke="#bdbec3" stroke-width="2"/></svg></div><span>Image</span></div>
                        <div class="card"><div class="card-ico"><svg width="46" height="46" viewBox="0 0 46 46"><path d="M23 0v8M23 38v8M0 23h8M38 23h8M7 7l6 5M33 34l6 5M39 7l-6 5M13 34l-6 5" stroke="#000" stroke-width="2"/></svg></div><span>Spinner</span></div>
                        <div class="card"><div class="card-ico"><svg width="64" height="40" viewBox="0 0 64 40"><rect x="1" y="1" width="62" height="38" rx="6" fill="none" stroke="#bdbec3" stroke-width="2"/><rect x="8" y="8" width="30" height="6" fill="#000"/><path d="M8 19h48M8 25h48M8 31h48" stroke="#000" stroke-width="2" stroke-dasharray="30 4 14 0"/></svg></div><span>Card</span></div>
                    </div>
                    <h4 class="pal-head">FORMS</h4>
                    <div class="pal-grid">
                        <div class="card"><div class="card-ico"><svg width="56" height="24" viewBox="0 0 56 24"><rect x="1" y="1" width="54" height="22" rx="7" fill="none" stroke="#000" stroke-width="2"/><path d="M13 12h30" stroke="#000" stroke-width="3"/></svg></div><span>Button</span></div>
                        <div class="card"><div class="card-ico"><svg width="64" height="26" viewBox="0 0 64 26"><rect x="1" y="1" width="62" height="24" rx="6" fill="none" stroke="#bdbec3" stroke-width="2"/><path d="M8 13h28" stroke="#000" stroke-width="2"/><path d="M42 11l7 6 7-6" fill="none" stroke="#000" stroke-width="2"/></svg></div><span>Dropdown<br>field</span></div>
                        <div class="card"><div class="card-ico"><svg width="34" height="34" viewBox="0 0 34 34"><rect x="1" y="1" width="32" height="32" fill="none" stroke="#000" stroke-width="2"/><path d="M8 17l9 9L28 6" fill="none" stroke="#000" stroke-width="1.500"/></svg></div><span>Checkbox<br>field</span></div>
                        <div class="card"><div class="card-ico"><svg width="64" height="14" viewBox="0 0 64 14"><path d="M0 7h17" stroke="#000" stroke-width="2"/><circle cx="23" cy="7" r="5.500" fill="none" stroke="#000" stroke-width="2"/><path d="M29 7h35" stroke="#bdbec3" stroke-width="2"/></svg></div><span>Slider field</span></div>
                        <div class="card"><div class="card-ico"><svg width="68" height="22" viewBox="0 0 68 22"><rect x="1" y="1" width="66" height="20" rx="10" fill="none" stroke="#000" stroke-width="2"/><path d="M12 7l8 8M20 7l-8 8M30 7l8 8M38 7l-8 8M48 7l8 8M56 7l-8 8" stroke="#bdbec3" stroke-width="2"/></svg></div><span>Password<br>field</span></div>
                        <div class="card"><div class="card-ico"><svg width="68" height="22" viewBox="0 0 68 22"><rect x="1" y="1" width="66" height="20" rx="10" fill="none" stroke="#000" stroke-width="2"/><path d="M15 5v12" stroke="#000" stroke-width="2"/></svg></div><span>Input field</span></div>
                    </div>
                    <h4 class="pal-head">SCROLL VIEW</h4>
                    <div class="pal-grid">
                        <div class="card"><div class="card-ico"><svg width="64" height="22" viewBox="0 0 64 22"><rect x="1" y="1" width="62" height="20" fill="none" stroke="#000" stroke-width="2" stroke-dasharray="4 3"/></svg></div><span>Container</span></div>
                        <div class="card"><div class="card-ico"><svg width="64" height="22" viewBox="0 0 64 22"><g fill="none" stroke="#000" stroke-width="2" stroke-dasharray="3 3"><rect x="1" y="1" width="19" height="20"/><rect x="22" y="1" width="19" height="20"/><rect x="44" y="1" width="19" height="20"/></g></svg></div><span>Row</span></div>
                        <div class="card"><div class="card-ico"><svg width="60" height="26" viewBox="0 0 60 26"><rect x="1" y="1" width="50" height="24" fill="none" stroke="#000" stroke-width="2" stroke-dasharray="6 4"/><rect x="56" y="0" width="4" height="26" fill="#bdbec3"/><rect x="56" y="3" width="4" height="8" fill="#000"/></svg></div><span>Scroll view</span></div>
                    </div>
                    <h4 class="pal-head">LISTS</h4>
                    <div class="pal-grid">
                        <div class="card"><div class="card-ico"><svg width="64" height="4" viewBox="0 0 64 4"><path d="M0 2h64" stroke="#000" stroke-width="2"/></svg></div><span>List divider</span></div>
                        <div class="card"><div class="card-ico"><svg width="64" height="14" viewBox="0 0 64 14"><path d="M0 2h22" stroke="#000" stroke-width="3.500"/><path d="M0 12h64" stroke="#bdbec3" stroke-width="2"/></svg></div><span>List section<br>header</span></div>
                        <div class="card"><div class="card-ico"><svg width="64" height="36" viewBox="0 0 64 36"><path d="M0 1h64M0 35h64" stroke="#bdbec3" stroke-width="2"/><rect x="1" y="11" width="22" height="14" fill="none" stroke="#000" stroke-width="2"/><path d="M2 22l7-7 6 5 3-2 5 4" fill="none" stroke="#000" stroke-width="1.500"/><path d="M30 18h34" stroke="#000" stroke-width="3"/></svg></div><span>Image list<br>item</span></div>
                        <div class="card"><div class="card-ico"><svg width="64" height="36" viewBox="0 0 64 36"><path d="M0 1h64M0 35h64" stroke="#bdbec3" stroke-width="2"/><rect x="1" y="11" width="22" height="14" fill="none" stroke="#000" stroke-width="2"/><path d="M2 22l7-7 6 5 3-2 5 4" fill="none" stroke="#000" stroke-width="1.500"/><path d="M30 13h16" stroke="#000" stroke-width="3"/><path d="M30 19h34M30 23h34" stroke="#000" stroke-width="2"/></svg></div><span>Large image<br>list item</span></div>
                        <div class="card"><div class="card-ico"><svg width="64" height="28" viewBox="0 0 64 28"><path d="M0 1h64M0 27h64" stroke="#bdbec3" stroke-width="2"/><path d="M0 14h34" stroke="#000" stroke-width="3"/><path d="M55 9l5 5-5 5" fill="none" stroke="#000" stroke-width="2"/></svg></div><span>List item</span></div>
                        <div class="card"><div class="card-ico"><svg width="64" height="28" viewBox="0 0 64 28"><path d="M0 1h64M0 27h64" stroke="#bdbec3" stroke-width="2"/><path d="M11 6l2.300 5.400 5.700.5-4.300 3.800 1.300 5.600-5-3-5 3 1.300-5.600L3 11.900l5.700-.5z" fill="#000"/><path d="M28 14h36" stroke="#000" stroke-width="3"/></svg></div><span>Icon list item</span></div>
                        <div class="card"></div>
                        <div class="card"></div>
                    </div>
                </section>
                <section class="stage">
                    <div class="stage-bar">
                        <svg class="stage-phone" width="18" height="30" viewBox="0 0 18 30"><rect x="1.500" y="1.500" width="15" height="27" rx="3" fill="none" stroke="#000" stroke-width="3"/><path d="M0 6h18M0 24h18" stroke="#000" stroke-width="2"/></svg>
                        <i class="caret first"></i>
                        <span class="stage-device">iPhone XR/XS Max/6+/7+/8+ (414px)</span>
                        <span class="stage-zoom">100%<i class="caret"></i></span>
                        <span class="stage-view">VIEW</span>
                        <span class="switch"><i></i></span>
                        <span class="stage-vars">VARIABLES</span>
                        <svg class="stage-bug" width="32" height="30" viewBox="0 0 32 30"><path d="M9 1l4 5h6l4-5" fill="none" stroke="#55585e" stroke-width="2"/><path d="M7 8h18l2 6H5z" fill="#55585e"/><path d="M6 15h20v8c0 4-4 6-10 6s-10-2-10-6zM16 15v14M1 10l4 5M31 10l-4 5M0 20h6M26 20h6M1 29l5-5M31 29l-5-5" fill="none" stroke="#55585e" stroke-width="2"/></svg>
                    </div>
                    <div class="canvas">
                        <div class="phone">
                            <h1 class="ph-title">NASA Image Explorer</h1>
                            <p class="ph-text">Busca imágenes que tiene la NASA sobre algún tema de interés</p>
                            <div class="ph-input">
                                <label>¿Qué deseas buscar?</label>
                                <div>Lorem ipsum</div>
                            </div>
                            <div class="ph-button">Buscar</div>
                            <h2 class="ph-sub">Resultados:</h2>
                            <div class="sel-bar">
                                <div class="sel-fill"></div>
                                <div class="sel-tab">
                                    <span>Large image list item 1</span>
                                    <svg width="30" height="30" viewBox="0 0 30 30"><rect x="1" y="1" width="20" height="20" rx="3" fill="none" stroke="#fff" stroke-width="2.500"/><rect x="8" y="8" width="21" height="21" rx="3" fill="#fff"/></svg>
                                    <svg width="24" height="24" viewBox="0 0 24 24"><circle cx="12" cy="12" r="12" fill="#fff"/><path d="M7.500 7.500l9 9M16.500 7.500l-9 9" stroke="#4db2fb" stroke-width="3"/></svg>
                                </div>
                            </div>
                            <div class="list-card">
                                <div class="list-thumb"><svg width="110" height="87" viewBox="0 0 110 87"><rect width="110" height="87" rx="9" fill="#a6b0bc"/><path d="M20 70l17-20 13 12 19-23 25 31z" fill="#f1f2f5"/></svg></div>
                                <div class="list-text">
                                    <strong>Title</strong>
                                    <span>Lorem ipsum dolor sit amet, consetetur sadipscing elitr.</span>
                                </div>
                            </div>
                        </div>
                    </div>
                </section>
            </div>
            <div class="logicbar">
                <span class="logic-for">Show logic for</span>
                <span class="logic-name">LARGE IMAGE LIST ITEM 1</span>
                <svg width="34" height="34"><use href="#circle-up"/></svg>
            </div>
        </div>

        <aside class="inspector">
            <div class="ins-head">
                <div class="ins-name">Large image list item 1</div>
                <div class="ins-type">Large image list item</div>
            </div>
            <div class="ins-tabs">
                <span class="active">PROPERTIES</span><span>STYLE</span><span>LAYOUT</span>
            </div>
            <div class="props">
                <div class="field">
                    <div class="field-label">Title label <svg width="24" height="24"><use href="#next"/></svg><svg width="24" height="24"><use href="#info"/></svg></div>
                    <div class="field-row">
                        <div class="type-box"><span class="abc">A<sub>B</sub><sub class="c">C</sub></span></div>
                        <div class="field-input">Title</div>
                    </div>
                </div>
                <div class="field">
                    <div class="field-label">Description text <svg width="24" height="24"><use href="#next"/></svg><svg width="24" height="24"><use href="#info"/></svg></div>
                    <div class="field-row">
                        <div class="type-box"><span class="abc">A<sub>B</sub><sub class="c">C</sub></span></div>
                        <div class="field-input">Lorem ipsum dolor sit amet, consetetu</div>
                    </div>
                </div>
                <div class="field">
                    <div class="field-label">Image source <svg width="24" height="24"><use href="#next"/></svg><svg width="24" height="24"><use href="#info"/></svg></div>
                    <div class="field-row">
                        <div class="type-box"><svg width="36" height="24"><use href="#side-img"/></svg></div>
                        <div class="field-input has-pic"><span>https://s3.amazonaws.com/appgy</span><svg width="24" height="22"><use href="#pic"/></svg></div>
                    </div>
                </div>
                <div class="field">
                    <div class="field-label">Background Image <svg width="24" height="24"><use href="#next"/></svg><svg width="24" height="24"><use href="#info"/></svg></div>
                    <div class="field-row">
                        <div class="type-box"><svg width="36" height="24"><use href="#side-img"/></svg></div>
                        <div class="field-input has-pic hint"><span>Choose image URL</span><svg width="24" height="22"><use href="#pic"/></svg></div>
                    </div>
                </div>
                <div class="field">
                    <div class="field-label">Repeat with <svg width="24" height="24"><use href="#info"/></svg></div>
                    <div class="field-row">
                        <div class="type-box dark">
                            <svg width="36" height="30" viewBox="0 0 36 30"><path d="M9 26V7M2 13l7-7 7 7M27 4v19M20 17l7 7 7-7M12 5h10M14 25h10M4 28L32 2" fill="none" stroke="#fff" stroke-width="2"/></svg>
                        </div>
                        <div class="field-none">Not repeated</div>
                    </div>
                </div>
            </div>
            <div class="tree-tab"><span>TREE</span></div>
            <div class="tooltip">Not bound to any value</div>
            <div class="tree">
                <h4>PAGE LAYOUT</h4>
                <div class="tree-row"><i class="dot"></i>Title 1</div>
                <div class="tree-row"><i class="dot"></i>Text 1</div>
                <div class="tree-row"><i class="sq"></i>Input field 1</div>
                <div class="tree-row"><i class="dot"></i>Button 1</div>
                <div class="tree-row"><i class="dot"></i>Title 2</div>
                <div class="tree-row selected"><i class="sq"></i>Large image list item 1
                    <svg width="26" height="26" viewBox="0 0 26 26"><path d="M16 1l5 4-9 12-6 2 1-6z" fill="#000"/><rect x="1" y="22" width="24" height="3" fill="#000"/></svg>
                </div>
            </div>
        </aside>

        <div class="status">
            <div class="status-pct">80%</div>
            <div class="status-box">
                <div>
                    <div class="status-label">YOUR LEARNING STATUS</div>
                    <div class="status-topic">Logic</div>
                </div>
                <svg width="32" height="32"><use href="#circle-up"/></svg>
            </div>
        </div>
    </div>
</div>
</body>
</html>
```

FILE: styles.css
```css
*, *::before, *::after {
    box-sizing: border-box;
}

body {
    margin: 0;
    width: 3360px;
    height: 2100px;
    overflow: hidden;
    position: relative;
    font-family: "Lato", "Liberation Sans", sans-serif;
    background: linear-gradient(180deg, #06132b 0%, #10233f 30%, #2b3344 55%, #17233c 70%, #0b1730 100%);
}

.defs {
    position: absolute;
}

/* mac menu bar */
.menubar {
    height: 50px;
    background: #06132b;
    border-bottom: 2px solid #020a18;
    color: #f1f2f4;
    display: flex;
    align-items: center;
    font-family: "Inter", sans-serif;
    font-size: 25.5px;
}

.menu-apple {
    width: 27px;
    height: 33px;
    margin-left: 40px;
    margin-right: 40px;
    flex: none;
}

.menu-left {
    display: flex;
    gap: 41.5px;
}

.menu-left strong {
    font-weight: 700;
}

.menu-right {
    margin-left: auto;
    display: flex;
    align-items: center;
    padding-right: 36px;
}

.tray {
    width: 70px;
    display: flex;
    justify-content: center;
}

.menu-batt {
    margin-left: 14px;
    letter-spacing: -1px;
}

.menu-gap {
    margin-left: 10px;
}

.menu-wifi {
    margin-left: 34px;
}

.menu-head {
    margin-left: 40px;
}

.menu-user {
    margin-left: 38px;
}

.menu-toggle {
    margin-left: 34px;
}

.menu-clock {
    margin-left: 32px;
}

/* dock */
.dock {
    position: absolute;
    left: 11px;
    top: 272px;
    width: 96px;
    height: 1603px;
    z-index: 5;
    padding-top: 7px;
    border-radius: 26px;
    background: linear-gradient(180deg, #66738a, #5a6479);
    border: 1px solid #7b8699;
    box-shadow: 2px 0 24px rgba(0, 0, 0, 0.28);
    display: flex;
    flex-direction: column;
    align-items: center;
}

.dock-slot {
    width: 100%;
    height: 80px;
    flex: none;
    position: relative;
    display: flex;
    align-items: center;
    justify-content: center;
}

.dock-slot svg {
    width: 61px;
    height: 61px;
    margin-left: 4px;
}

.dock-slot svg.wide {
    width: 72px;
    height: 62px;
    margin-left: 8px;
}

.dock-slot svg.big {
    width: 72px;
    height: 72px;
    margin-left: 4px;
}

.dock-slot.on::before {
    content: "";
    position: absolute;
    left: 3px;
    top: 36px;
    width: 8px;
    height: 8px;
    border-radius: 50%;
    background: #000;
}

.dock-sep {
    flex: none;
    width: 70px;
    height: 34px;
    margin-left: 6px;
    position: relative;
    background: linear-gradient(#33394a, #33394a) center 17px / 100% 2px no-repeat;
}

.dock-sep.low {
    height: 36px;
}

/* browser window */
.window {
    margin-left: 108px;
    height: 2050px;
    background: #fff;
    border-radius: 20px 20px 20px 20px / 20px 20px 22px 22px;
    border-left: 2px solid #c9cbd0;
    overflow: hidden;
}

.tabstrip {
    height: 84px;
    background: #dfe0e4;
    display: flex;
    align-items: flex-end;
    position: relative;
}

.lights {
    width: 185px;
    height: 68px;
    display: flex;
    align-items: center;
    gap: 16px;
    padding-left: 42px;
    padding-bottom: 16px;
}

.lights i {
    width: 24px;
    height: 24px;
    border-radius: 50%;
}

.lights .red { background: #ee6a5e; }
.lights .yellow { background: #f5bd4f; }
.lights .green { background: #61c454; }

.tab {
    width: 481px;
    height: 68px;
    background: #fff;
    border-radius: 16px 16px 0 0;
    display: flex;
    align-items: center;
    padding-left: 24px;
    position: relative;
    font-family: "Inter", sans-serif;
    font-size: 23.5px;
    color: #3c4043;
}

.tab::before,
.tab::after {
    content: "";
    position: absolute;
    bottom: 0;
    width: 14px;
    height: 14px;
}

.tab::before {
    left: -14px;
    background: radial-gradient(circle at 0 0, #dfe0e4 14px, #fff 15px);
}

.tab::after {
    right: -14px;
    background: radial-gradient(circle at 100% 0, #dfe0e4 14px, #fff 15px);
}

.tab-fav {
    flex: none;
}

.tab-title {
    width: 352px;
    margin-left: 17px;
    white-space: nowrap;
    letter-spacing: -0.3px;
    -webkit-mask-image: linear-gradient(90deg, #000 88%, transparent 100%);
    mask-image: linear-gradient(90deg, #000 88%, transparent 100%);
}

.tab-x {
    font-size: 20px;
    margin-left: 11px;
}

.tab-plus {
    font-size: 44px;
    line-height: 64px;
    height: 68px;
    margin-left: 30px;
    color: #3c4043;
    font-family: "Inter", sans-serif;
    font-weight: 300;
}

.tab-more {
    position: absolute;
    right: 38px;
    top: 44px;
}

.toolbar {
    height: 64px;
    display: flex;
    align-items: center;
    padding-left: 30px;
    padding-top: 8px;
    gap: 36px;
    background: #fff;
}

.tool-btn {
    width: 28px;
    height: 28px;
    flex: none;
}

.omnibox {
    width: 2496px;
    height: 56px;
    margin-left: -4px;
    background: #f1f3f4;
    border-radius: 28px;
    display: flex;
    align-items: center;
    padding-left: 26px;
    padding-right: 20px;
    font-family: "Inter", sans-serif;
}

.url {
    margin-left: 23px;
    font-size: 28px;
    color: #6f7276;
    letter-spacing: -0.1px;
    flex: 1;
}

.url b {
    font-weight: 400;
    color: #202124;
}

.omni-icon {
    width: 28px;
    height: 30px;
    margin-left: 36px;
}

.extensions {
    display: flex;
    align-items: center;
    gap: 32px;
    margin-left: -9px;
}

.avatar {
    margin: 0 -4px;
}

.bookmarks {
    height: 74px;
    border-bottom: 3px solid #dcdde0;
    display: flex;
    align-items: center;
    padding-left: 33px;
    gap: 34px;
    font-family: "Inter", sans-serif;
    font-size: 24px;
    letter-spacing: -0.25px;
    color: #303236;
}

.bm {
    display: flex;
    align-items: center;
    white-space: nowrap;
}

.bm-ico {
    margin-right: 16px;
    flex: none;
}

.bm-apple .bm-ico {
    margin-right: 22px;
}

.bm-more {
    margin-left: auto;
    padding-right: 16px;
    border-right: 2px solid #d6d7da;
    line-height: 46px;
    font-size: 30px;
    margin-right: -8px;
}

.bm-other {
    padding-right: 20px;
}

/* appgyver header */
.app-header {
    height: 112px;
    border-bottom: 2px solid #eeeff1;
    display: grid;
    grid-template-columns: 1127px 1fr auto;
    align-items: center;
    padding-right: 25px;
}

.brand {
    display: flex;
    align-items: center;
    padding-left: 40px;
}

.brand-logo {
    margin-right: 36px;
}

.brand-name {
    font-size: 32px;
    line-height: 38px;
    color: #6b7078;
    letter-spacing: 0.7px;
    padding-top: 2px;
}

.brand-page {
    font-size: 24px;
    line-height: 34px;
    color: #4db2f5;
    display: flex;
    align-items: center;
}

.brand-page i {
    width: 0;
    height: 0;
    border-left: 7px solid #d7d8dd;
    border-top: 8px solid transparent;
    border-bottom: 8px solid transparent;
    margin-left: 2px;
    margin-right: 11px;
}

.app-nav {
    display: flex;
    gap: 64px;
}

.app-nav a {
    height: 84px;
    margin-top: 10px;
    display: grid;
    grid-template-rows: 36px 48px;
    align-items: center;
    justify-items: center;
    font-size: 21.5px;
    color: #808186;
    white-space: nowrap;
    letter-spacing: 0.5px;
}

.app-nav a.active {
    color: #4db2f5;
}

.app-actions {
    display: flex;
    gap: 10px;
}

.app-actions button {
    width: 241px;
    height: 66px;
    font-family: inherit;
    font-size: 21px;
    letter-spacing: 0.4px;
    border: 2px solid #2b66c7;
    border-radius: 1px;
}

.btn-revert {
    background: #fff;
    color: #2b66c7;
}

.btn-save {
    background: #2b66c7;
    color: #fff;
}

.app-body {
    display: grid;
    grid-template-columns: 2710px 540px;
    grid-template-rows: 1636px 80px;
}

.designer {
    display: flex;
    flex-direction: column;
    min-width: 0;
}

.design-main {
    height: 1524px;
    display: flex;
}

/* left palette */
.palette {
    width: 477px;
    flex: none;
    height: 1524px;
    overflow: hidden;
    background: #eeeff1;
    padding-left: 8px;
    position: relative;
}

.palette::after {
    content: "";
    position: absolute;
    right: 0;
    top: 168px;
    width: 2px;
    height: 1180px;
    background: #343947;
}

.pal-tabs {
    display: flex;
    height: 80px;
    margin-left: -8px;
    padding-left: 8px;
    padding-top: 8px;
    font-size: 21px;
    letter-spacing: 0.7px;
    color: #8d8f95;
}

.pal-tabs span {
    width: 155px;
    display: flex;
    align-items: center;
    justify-content: center;
    padding-bottom: 6px;
    border-right: 1px solid #dcdde0;
}

.pal-tabs span:last-child {
    width: 152px;
    border-right: 0;
}

.pal-tabs .active {
    background: #fff;
    color: #111;
    border-right: 0;
    border-radius: 6px 0 0 0;
}

.marketplace {
    width: 460px;
    height: 86px;
    background: #fff;
    display: flex;
    align-items: center;
    justify-content: center;
    gap: 7px;
    font-size: 21px;
    letter-spacing: 0.5px;
    color: #8d8f95;
}

.pal-head {
    margin: 0;
    height: 58px;
    padding: 23px 0 0 6px;
    font-size: 21px;
    line-height: 24px;
    font-weight: 400;
    letter-spacing: 0.7px;
    color: #111;
}

.pal-head.first {
    height: 52px;
    padding-top: 17px;
}

.pal-grid {
    display: grid;
    grid-template-columns: repeat(3, 148px);
    grid-auto-rows: 152px;
    gap: 8px;
}

.card {
    height: 152px;
    background: #fff;
    border-radius: 5px;
    color: #1a1a1a;
    font-size: 23px;
    line-height: 24px;
    text-align: center;
    white-space: nowrap;
    letter-spacing: 0.4px;
}

.card-ico {
    height: 96px;
    padding-top: 22px;
    display: flex;
    align-items: center;
    justify-content: center;
}

.card span {
    height: 48px;
    display: flex;
    align-items: center;
    justify-content: center;
}

/* stage */
.stage {
    flex: 1;
    display: flex;
    flex-direction: column;
}

.stage-bar {
    height: 80px;
    flex: none;
    background: #fff;
    display: flex;
    align-items: center;
    padding-left: 38px;
    color: #111;
    font-size: 22.3px;
}

.stage-phone {
    flex: none;
}

.caret {
    display: inline-block;
    width: 0;
    height: 0;
    border-top: 9px solid #111;
    border-left: 7px solid transparent;
    border-right: 7px solid transparent;
    margin-left: 11px;
}

.caret.first {
    margin-left: 17px;
}

.stage-device {
    margin-left: 20px;
    width: 429px;
}

.stage-zoom {
    display: flex;
    align-items: center;
    width: 88px;
    height: 44px;
    border-bottom: 3px solid #dcdde0;
}

.stage-view {
    margin-left: 1253px;
    font-size: 21px;
}

.switch {
    width: 65px;
    height: 18px;
    margin: 0 16px 0 7px;
    position: relative;
    background: linear-gradient(#d7d8dd, #d7d8dd) center / 100% 6px no-repeat;
}

.switch i {
    position: absolute;
    left: 0;
    top: 0;
    width: 18px;
    height: 18px;
    border-radius: 50%;
    background: #4db2f5;
}

.stage-vars {
    font-size: 22px;
    width: 150px;
    letter-spacing: 0.3px;
}

.canvas {
    flex: 1;
    background-color: #e1e3e7;
    background-image:
        linear-gradient(90deg, rgba(255, 255, 255, 0.2) 2px, transparent 2px),
        linear-gradient(rgba(255, 255, 255, 0.2) 2px, transparent 2px);
    background-size: 52px 52px;
    background-position: 3px 45px;
    display: flex;
    justify-content: center;
    padding-top: 12px;
    position: relative;
}

/* phone preview */
.phone {
    width: 829px;
    height: 1400px;
    background: #f9f9f9;
    padding: 50px 33px 0 32px;
    font-family: "Inter", sans-serif;
    color: #2e303a;
}

.ph-title {
    margin: 0;
    font-size: 50px;
    line-height: 58px;
    font-weight: 600;
    letter-spacing: -0.3px;
    padding-bottom: 2px;
}

.ph-text {
    margin: 34px 0 0;
    font-size: 34px;
    line-height: 47px;
    font-weight: 300;
    width: 770px;
}

.ph-input {
    margin-top: 34px;
    height: 144px;
    background: #fff;
    border-radius: 8px;
    padding: 22px 32px 0;
    font-size: 34.5px;
    font-weight: 300;
}

.ph-input label {
    display: block;
    height: 50px;
    line-height: 38px;
    font-size: 25.5px;
    font-weight: 400;
    color: #87889a;
}

.ph-input div {
    line-height: 48px;
}

.ph-button {
    margin-top: 32px;
    height: 112px;
    background: #0020c4;
    border-radius: 28px;
    color: #fff;
    font-size: 34px;
    font-weight: 600;
    display: flex;
    align-items: center;
    justify-content: center;
    box-shadow: 0 6px 18px rgba(0, 0, 0, 0.14);
}

.ph-sub {
    margin: 34px 0 -12px;
    font-size: 50px;
    line-height: 58px;
    padding-bottom: 2px;
    font-weight: 600;
}

.sel-bar {
    display: flex;
    align-items: flex-end;
    height: 47px;
    position: relative;
}

.sel-fill {
    flex: 1;
    height: 33px;
    background: #d2e8f8;
}

.sel-tab {
    width: 372px;
    height: 47px;
    background: #4db2fb;
    border-radius: 6px 6px 0 0;
    color: #fff;
    font-family: "Lato", sans-serif;
    font-size: 23px;
    display: flex;
    align-items: center;
    padding-left: 28px;
}

.sel-tab span {
    width: 256px;
    white-space: nowrap;
    letter-spacing: 0.4px;
}

.sel-tab svg:last-child {
    margin-left: 13px;
}

.list-card {
    height: 190px;
    background: #fff;
    border: 2px solid #4db2fb;
    border-radius: 4px;
    display: flex;
}

.list-thumb {
    width: 173px;
    flex: none;
    background: #f0f1f5;
    display: flex;
    align-items: center;
    justify-content: center;
}

.list-text {
    padding-left: 26px;
    width: 500px;
    display: flex;
    flex-direction: column;
    justify-content: center;
    font-size: 30px;
    line-height: 40px;
    font-weight: 300;
}

.list-text strong {
    font-size: 32px;
    font-weight: 600;
    margin-bottom: 3px;
}

/* bottom bars */
.logicbar {
    height: 112px;
    background: #434955;
    display: flex;
    align-items: center;
    justify-content: flex-end;
    padding-right: 35px;
    color: #fff;
}

.logic-for {
    font-size: 24px;
    letter-spacing: 0.1px;
}

.logic-name {
    margin: 0 16px 0 15px;
    font-size: 25.5px;
    color: #4db2f5;
    letter-spacing: 0.2px;
}

.status {
    grid-column: 1 / 3;
    height: 80px;
    background: #2a1496;
    display: flex;
    color: #fff;
}

.status-pct {
    flex: 1;
    text-align: right;
    padding-right: 56px;
    font-size: 42px;
    line-height: 76px;
    font-weight: 700;
}

.status-box {
    width: 650px;
    background: #9b92f8;
    display: flex;
    align-items: center;
    justify-content: space-between;
    padding: 3px 32px 0 30px;
}

.status-label {
    font-size: 19px;
    line-height: 28px;
    letter-spacing: 0.7px;
    color: #eeeafe;
}

.status-topic {
    font-size: 28px;
    line-height: 34px;
    color: #1d1d2b;
}

/* right inspector */
.inspector {
    position: relative;
    background: #fff;
    display: flex;
    flex-direction: column;
    height: 1636px;
}

.inspector::before {
    content: "";
    position: absolute;
    left: -2px;
    top: 121px;
    width: 2px;
    height: 1252px;
    background: #343947;
}

.ins-head {
    height: 86px;
    text-align: center;
    font-size: 23px;
    line-height: 30px;
    padding-top: 13px;
    letter-spacing: 0.4px;
}

.ins-name {
    color: #4db2f5;
}

.ins-type {
    color: #8d8f95;
}

.ins-tabs {
    height: 81px;
    background: #eeeff1;
    border-top: 2px solid #dcdde0;
    padding: 7px 0 0 8px;
    display: flex;
    font-size: 21px;
    letter-spacing: 0.5px;
    color: #8d8f95;
}

.ins-tabs span {
    width: 175px;
    display: flex;
    align-items: center;
    justify-content: center;
    padding-bottom: 3px;
}

.ins-tabs span:last-child {
    flex: 1;
    border-left: 2px solid #dcdde0;
    padding-right: 10px;
}

.ins-tabs .active {
    background: #fff;
    color: #111;
    border-radius: 6px 0 0 0;
}

.props {
    height: 713px;
    margin-left: 8px;
    margin-right: 10px;
    padding: 21px 24px 0;
    background: #fff;
    position: relative;
}

.props::after {
    content: "";
    position: absolute;
    right: -10px;
    top: 0;
    width: 3px;
    height: 620px;
    background: #343947;
}

.field {
    height: 140px;
}

.field-label {
    height: 40px;
    display: flex;
    align-items: center;
    gap: 23px;
    font-size: 24.5px;
    font-weight: 700;
    color: #111;
    white-space: nowrap;
    letter-spacing: 0.5px;
}

.field-row {
    margin-top: 13px;
    display: flex;
    height: 55px;
}

.type-box {
    width: 56px;
    height: 55px;
    flex: none;
    border: 2px solid #343947;
    border-radius: 2px;
    color: #343947;
    display: flex;
    align-items: center;
    justify-content: center;
    position: relative;
}

.abc {
    font-size: 19px;
    font-weight: 300;
    line-height: 1;
    white-space: nowrap;
    margin-top: -8px;
}

.abc sub {
    font-size: 19px;
    line-height: 1;
    vertical-align: -6px;
    margin-left: 1px;
}

.abc sub.c {
    vertical-align: -9px;
}

.type-box.dark {
    background: #343947;
}

/* green marker round the repeat button */
.type-box.dark::after {
    content: "";
    position: absolute;
    left: -30px;
    top: -25px;
    width: 111px;
    height: 101px;
    border: 9px solid #6ef24a;
    border-radius: 20px;
}

.field-input {
    margin-left: 16px;
    width: 402px;
    height: 52px;
    border-bottom: 2px solid #d8d9dd;
    padding-left: 5px;
    padding-right: 8px;
    font-size: 23px;
    line-height: 44px;
    color: #2d2f33;
    white-space: nowrap;
    letter-spacing: 0.3px;
    display: flex;
    align-items: center;
    justify-content: space-between;
}

.field-input.has-pic svg {
    flex: none;
}

.hint {
    font-style: italic;
    color: #9a9ca2;
}

.field-none {
    margin-left: 16px;
    font-size: 23px;
    line-height: 50px;
    color: #a0a2a7;
    letter-spacing: 0.3px;
}

.tree-tab {
    margin-top: 8px;
    margin-left: 8px;
    height: 64px;
    background: linear-gradient(#fff 25px, #343947 25px);
    font-size: 21px;
    color: #444a58;
    padding: 33px 0 0 20px;
    position: relative;
}

.tree-tab::before {
    content: "";
    position: absolute;
    left: -8px;
    top: 25px;
    bottom: 0;
    width: 8px;
    background: #343947;
}

.tooltip {
    position: absolute;
    left: -79px;
    top: 880px;
    width: 278px;
    height: 63px;
    background: rgba(58, 65, 80, 0.97);
    border-radius: 4px;
    color: #fff;
    font-size: 23px;
    line-height: 62px;
    text-align: center;
    letter-spacing: 0.3px;
    z-index: 3;
}

.tree {
    flex: 1;
}

.tree h4 {
    margin: 0;
    height: 64px;
    padding: 30px 0 0 31px;
    font-size: 21px;
    line-height: 24px;
    font-weight: 400;
    letter-spacing: 0.7px;
    color: #111;
}

.tree-row {
    height: 60px;
    display: flex;
    align-items: center;
    padding-left: 31px;
    padding-right: 37px;
    font-size: 25.5px;
    color: #1a1a1a;
}

.tree-row i {
    flex: none;
    margin-right: 8px;
    border: 2px solid #111;
}

.tree-row .dot {
    width: 12px;
    height: 12px;
    border-radius: 50%;
    margin-left: 1px;
    margin-right: 10px;
}

.tree-row .sq {
    width: 15px;
    height: 15px;
}

.tree-row.selected {
    background: #d7d8dc;
}

.tree-row.selected svg {
    margin-left: auto;
}
```
